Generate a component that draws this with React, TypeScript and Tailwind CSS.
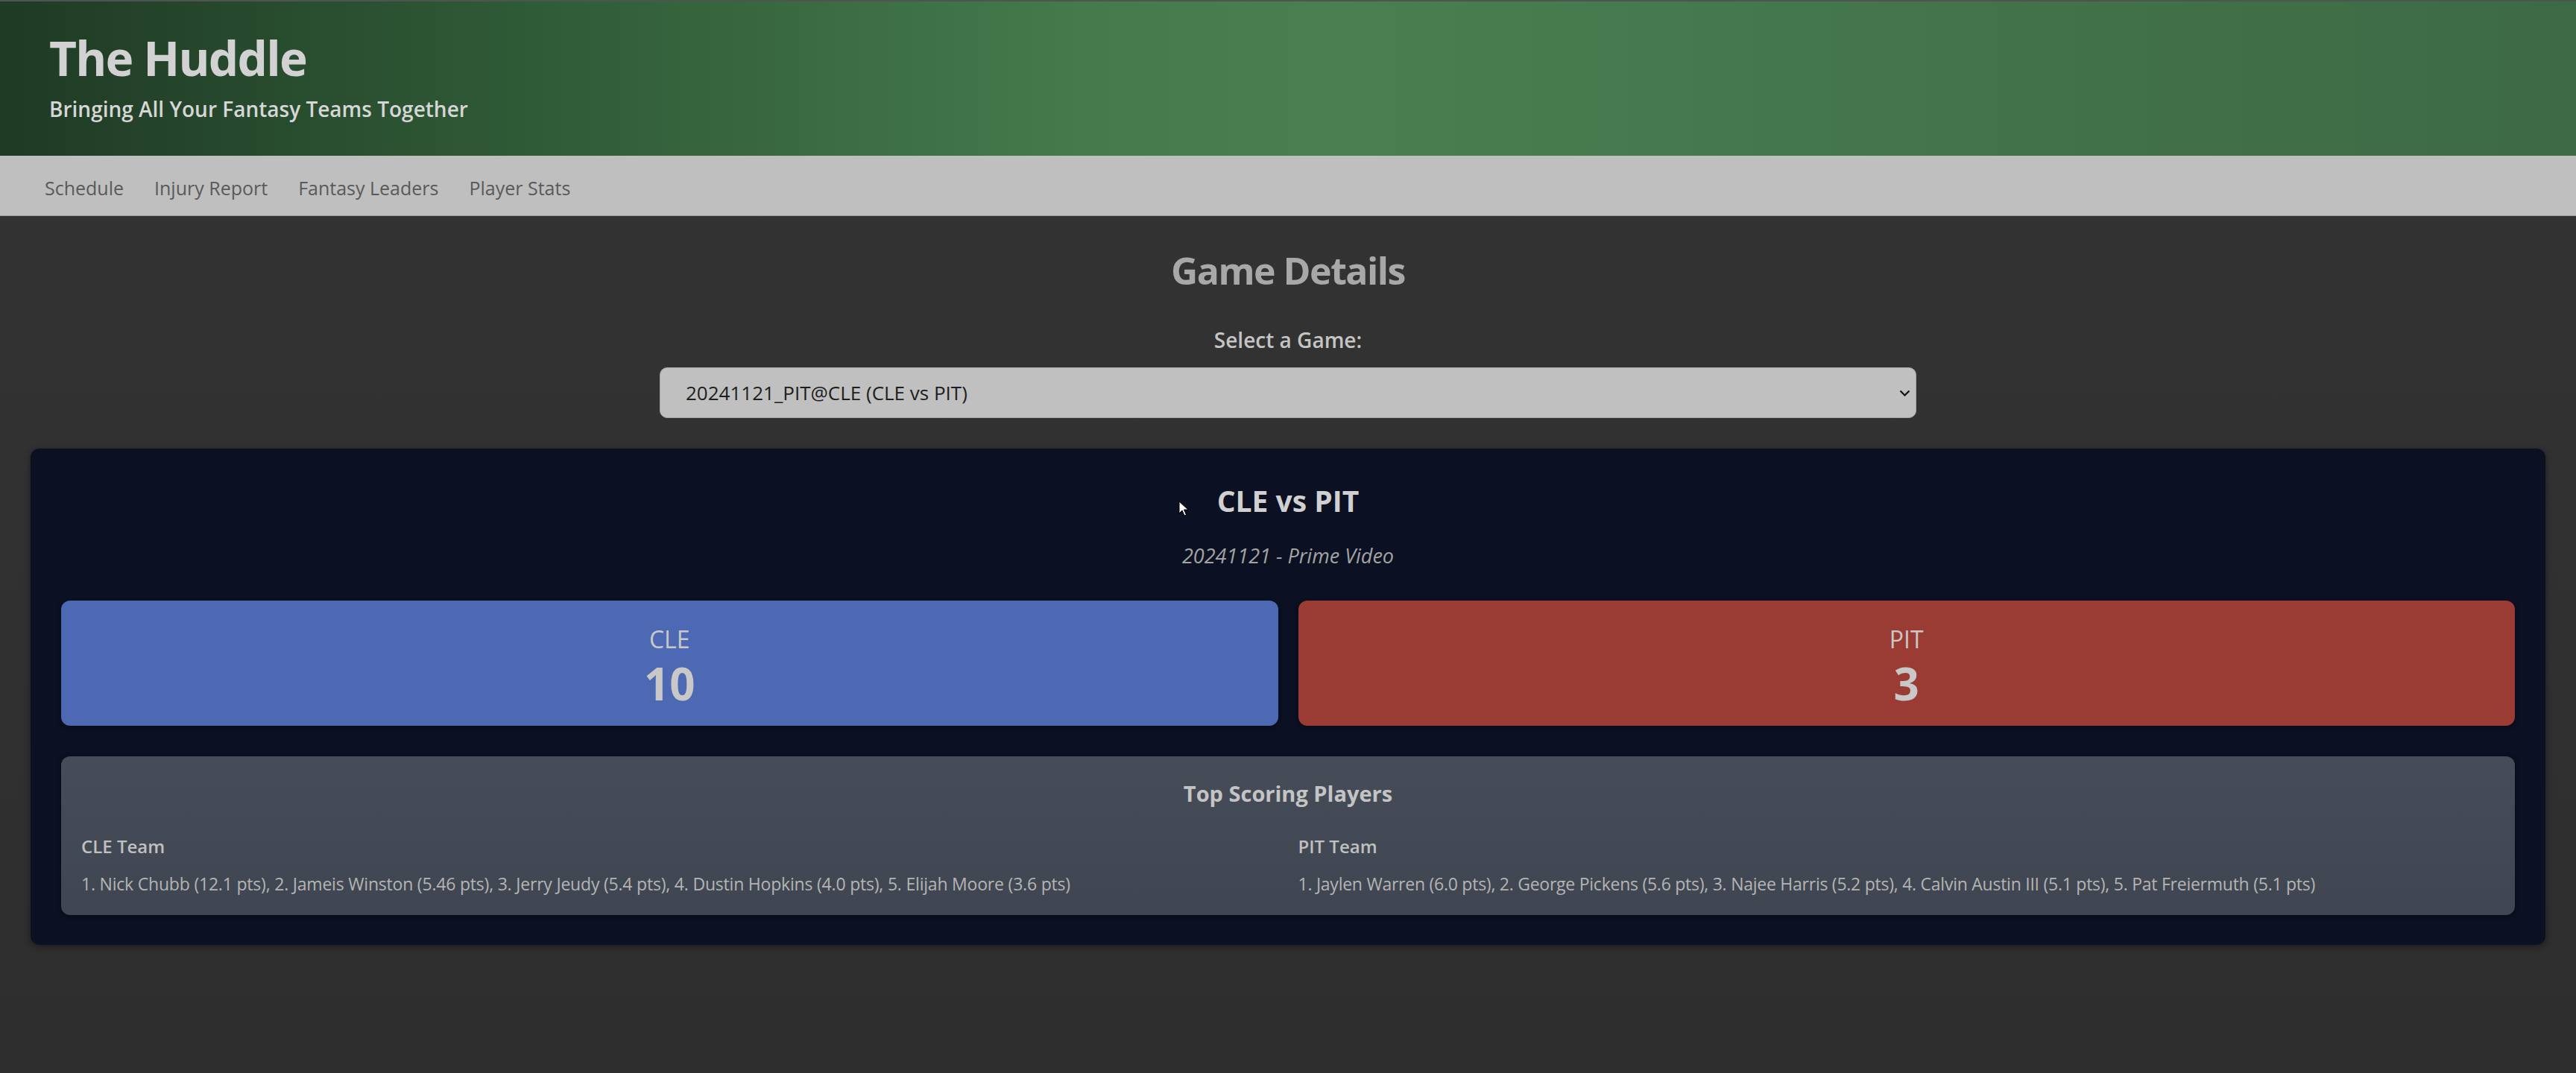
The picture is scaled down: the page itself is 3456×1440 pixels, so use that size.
import React from "react";

const cle =
  "1. Nick Chubb (12.1 pts), 2. Jameis Winston (5.46 pts), 3. Jerry Jeudy (5.4 pts), 4. Dustin Hopkins (4.0 pts), 5. Elijah Moore (3.6 pts)";
const pit =
  "1. Jaylen Warren (6.0 pts), 2. George Pickens (5.6 pts), 3. Najee Harris (5.2 pts), 4. Calvin Austin III (5.1 pts), 5. Pat Freiermuth (5.1 pts)";

export default function App() {
  return (
    <div className="min-h-screen w-full bg-[linear-gradient(to_bottom,#343434,#2e2e2e)] font-['Open_Sans','Noto_Sans',sans-serif]">
      <header className="h-[209px] border-t-2 border-[#4e544f] bg-[linear-gradient(to_right,#1f3a25_0%,#2f5a36_20%,#457a4c_42%,#4a7f51_52%,#43744a_75%,#3d6a45_100%)] pl-[66px] pt-[44px]">
        <h1 className="text-[64px] font-bold leading-none tracking-[-1.8px] text-[#d2d2d2]">The Huddle</h1>
        <p className="mt-[22px] text-[28px] font-semibold leading-none text-[#d6d6d6]">
          Bringing All Your Fantasy Teams Together
        </p>
      </header>

      <nav className="flex h-[81px] gap-[41px] border-b border-[#9c9c9c] bg-[#bfbfbf] pl-[60px] pt-[31px] text-[25px] leading-none text-[#5a5a5a]">
        <span>Schedule</span>
        <span>Injury Report</span>
        <span>Fantasy Leaders</span>
        <span>Player Stats</span>
      </nav>

      <main className="px-[41px] pb-[40px]">
        <h2 className="mt-[48px] text-center text-[50px] font-bold leading-none tracking-[-1.5px] text-[#a8a8a8]">
          Game Details
        </h2>
        <div className="mt-[54px] text-center text-[28px] font-semibold leading-none text-[#c4c4c4]">
          Select a Game:
        </div>
        <div className="relative mx-auto mt-[23px] h-[68px] w-[1686px]">
          <select
            className="h-full w-full appearance-none rounded-[10px] border border-[#a9a9a9] bg-[#c0c0c0] pl-[34px] text-[26px] text-[#1e1e1e] outline-none"
            defaultValue="g"
          >
            <option value="g">20241121_PIT@CLE (CLE vs PIT)</option>
          </select>
          <svg
            className="pointer-events-none absolute right-[8px] top-[30px]"
            width="15"
            height="9"
            viewBox="0 0 15 9"
            fill="none"
          >
            <path d="M1.5 1.5 L7.5 7.5 L13.5 1.5" stroke="#111" strokeWidth="2.2" />
          </svg>
        </div>

        <section className="relative mt-[41px] rounded-[12px] bg-[#0b1022] px-[41px] pb-[40px] pt-[50px] shadow-[0_2px_10px_rgba(0,0,0,0.45)]">
          <svg
            className="absolute left-[1540px] top-[70px]"
            width="14"
            height="22"
            viewBox="0 0 14 22"
          >
            <path d="M1 1 L1 17 L5 13 L8 20 L10.5 19 L7.5 12 L13 12 Z" fill="#fff" stroke="#000" strokeWidth="1" />
          </svg>
          <h3 className="text-center text-[39px] font-bold leading-none text-[#d0d0d0]">CLE vs PIT</h3>
          <p className="mt-[41px] text-center text-[27px] italic leading-none text-[#a3a3a3]">
            20241121 - Prime Video
          </p>

          <div className="mt-[47px] grid grid-cols-2 gap-[27px]">
            <div className="flex h-[168px] flex-col items-center rounded-[12px] bg-[#4d69b3] pt-[36px] shadow-[0_2px_6px_rgba(0,0,0,0.35)]">
              <div className="text-[32px] leading-none text-[#c8c8c8]">CLE</div>
              <div className="mt-[13px] text-[60px] font-bold leading-none text-[#c8c8c8]">10</div>
            </div>
            <div className="flex h-[168px] flex-col items-center rounded-[12px] bg-[#9a3c33] pt-[36px] shadow-[0_2px_6px_rgba(0,0,0,0.35)]">
              <div className="text-[32px] leading-none text-[#c8c8c8]">PIT</div>
              <div className="mt-[13px] text-[60px] font-bold leading-none text-[#c8c8c8]">3</div>
            </div>
          </div>

          <div className="mt-[41px] rounded-[12px] bg-[linear-gradient(to_bottom,#474d58,#404651)] px-[27px] pb-[30px] pt-[35px] shadow-[0_2px_6px_rgba(0,0,0,0.35)]">
            <h4 className="text-center text-[29px] font-bold leading-none text-[#c4c4c4]">
              Top Scoring Players
            </h4>
            <div className="mt-[45px] grid grid-cols-2 gap-[27px]">
              <div>
                <div className="text-[24px] font-semibold leading-none text-[#c0c0c0]">CLE Team</div>
                <div className="mt-[27px] text-[23px] leading-none tracking-[-0.2px] text-[#b4b4b4]">{cle}</div>
              </div>
              <div>
                <div className="text-[24px] font-semibold leading-none text-[#c0c0c0]">PIT Team</div>
                <div className="mt-[27px] text-[23px] leading-none tracking-[-0.25px] text-[#b4b4b4]">{pit}</div>
              </div>
            </div>
          </div>
        </section>
      </main>
    </div>
  );
}
